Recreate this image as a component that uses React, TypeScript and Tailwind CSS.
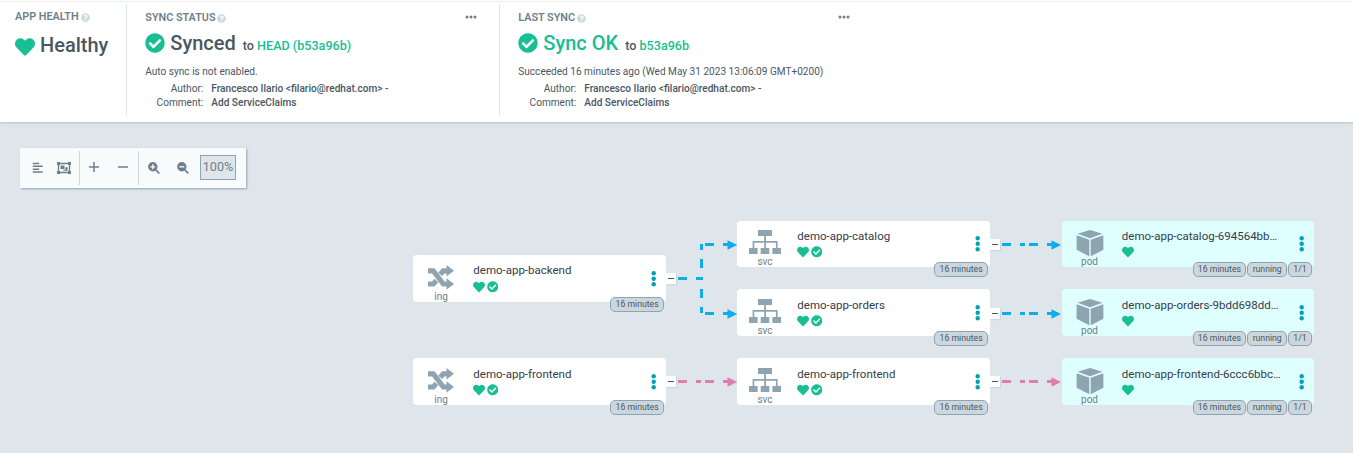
import React from "react";
import {
  FaAlignLeft,
  FaCheckCircle,
  FaHeart,
  FaQuestionCircle,
} from "react-icons/fa";

type Kind = "ing" | "svc" | "pod";

interface ResourceNode {
  kind: Kind;
  name: string;
  tags: string[];
  place: string;
  nameClass?: string;
  bodyClass?: string;
}

const nodes: ResourceNode[] = [
  { kind: "ing", name: "demo-app-backend", tags: ["16 minutes"], place: "left-[413px] top-[132px] h-[47px]", nameClass: "-mt-px mb-px" },
  { kind: "ing", name: "demo-app-frontend", tags: ["16 minutes"], place: "left-[413px] top-[235px] h-[47px]" },
  { kind: "svc", name: "demo-app-catalog", tags: ["16 minutes"], place: "left-[737px] top-[98px] h-[46px]", bodyClass: "-mt-px" },
  { kind: "svc", name: "demo-app-orders", tags: ["16 minutes"], place: "left-[737px] top-[166px] h-[47px]" },
  { kind: "svc", name: "demo-app-frontend", tags: ["16 minutes"], place: "left-[737px] top-[235px] h-[47px]" },
  { kind: "pod", name: "demo-app-catalog-694564bb…", tags: ["16 minutes", "running", "1/1"], place: "left-[1062px] top-[98px] h-[46px]", bodyClass: "-mt-px" },
  { kind: "pod", name: "demo-app-orders-9bdd698dd…", tags: ["16 minutes", "running", "1/1"], place: "left-[1062px] top-[166px] h-[47px]" },
  { kind: "pod", name: "demo-app-frontend-6ccc6bbc…", tags: ["16 minutes", "running", "1/1"], place: "left-[1062px] top-[235px] h-[47px]" },
];

const toggles = [
  "left-[666px] top-[150px]",
  "left-[666px] top-[253px]",
  "left-[990px] top-[116px]",
  "left-[990px] top-[185px]",
  "left-[990px] top-[253px]",
];

function PodIcon() {
  return (
    <svg width="28" height="27" viewBox="0 0 28 27" fill="#8fa4b1">
      <path d="M14 0 26.5 3.8 14 8.2 1.5 3.8Z" />
      <path d="M.6 5.2 13.3 9.7V26.3L.6 19.8Z" />
      <path d="M27.4 5.2 14.7 9.7V26.3L27.4 19.8Z" />
    </svg>
  );
}

function IngressIcon() {
  return (
    <svg width="26" height="25" viewBox="0 0 26 25" fill="none" stroke="#8fa4b1" strokeWidth="5.2">
      <path d="M0 5.8H5.3L15.3 19H20" />
      <path d="M0 19H5.3L8.4 15.5M12.2 9.4 15.3 5.8H20" />
      <path d="M18.5 0 26 5.8 18.5 11.6zM18.5 13.2 26 19 18.5 24.8z" fill="#8fa4b1" stroke="none" />
    </svg>
  );
}

function ServiceIcon() {
  return (
    <svg width="32" height="24" viewBox="0 0 32 24" fill="#8fa4b1">
      <path d="M9 0h14v6H9zM0 18h8.6v6H0zM11.7 18h8.6v6h-8.6zM23.4 18H32v6h-8.6z" />
      <path d="M15.2 6h1.8v12h-1.8zM3.6 11h25v1.8h-25zM3.6 11h1.7v7H3.6zM26.9 11h1.7v7h-1.7z" />
    </svg>
  );
}

function KindIcon({ kind }: { kind: Kind }) {
  if (kind === "ing") return <IngressIcon />;
  if (kind === "svc") return <ServiceIcon />;
  return <PodIcon />;
}

function Node({ node }: { node: ResourceNode }) {
  const pod = node.kind === "pod";
  return (
    <div className={`absolute rounded-[4px] ${pod ? "w-[252px] bg-[#dfffff]" : "w-[253px] bg-white"} ${node.place}`}>
      <div className={`flex ${node.bodyClass ?? ""}`}>
        <div className={`flex shrink-0 flex-col items-center pt-[9px] ${pod ? "w-[55px]" : "w-[56px]"}`}>
          <div className="mt-px flex h-[27px] items-start">
            <KindIcon kind={node.kind} />
          </div>
          <span className="text-[10px] leading-[10px] text-[#6d7f8b]">{node.kind}</span>
        </div>
        <div className={`flex grow flex-col pt-2 ${pod ? "pl-[4.8px]" : "pl-[4.3px]"}`}>
          <span className={`text-[11.5px] leading-4 whitespace-nowrap text-[#363c4a] ${node.nameClass ?? ""}`}>
            {node.name}
          </span>
          <div className="mt-[2px] flex items-center gap-[1.5px] text-[#18be94]">
            <FaHeart className="size-[12px]" />
            {!pod && <FaCheckCircle className="size-[11.5px]" />}
          </div>
        </div>
        <div className="flex w-[25px] shrink-0 justify-center pt-[15.5px]">
          <svg width="5" height="16" viewBox="0 0 5 16" fill="#00a2b3">
            <circle cx="2.7" cy="2.3" r="2.2" />
            <circle cx="2.7" cy="7.8" r="2.2" />
            <circle cx="2.7" cy="13.3" r="2.2" />
          </svg>
        </div>
      </div>
      <div className="absolute right-[2px] bottom-[-10px] flex gap-[1px]">
        {node.tags.map((tag) => (
          <span
            key={tag}
            className="flex h-[15px] items-center rounded-[5px] border border-[#8fa4b1] bg-[#ccd6dd] px-[4.3px] pb-[1px] text-[8.7px] leading-[12px] whitespace-nowrap text-[#495763]"
          >
            {tag}
          </span>
        ))}
      </div>
    </div>
  );
}

function Edges() {
  return (
    <svg className="absolute top-0 left-0" width="1353" height="330" viewBox="0 123 1353 330">
      <g fill="#0dadea">
        <path d="M678 277h9v3h-9zM696 277h7v3h-7zM700 244h3v6h-3zM700 259h3v9h-3zM700 289h3v9h-3zM700 307h3v6h-3z" />
        <path d="M705 243h9v3h-9zM723 243h5v3h-5zM727.5 240.3 737.3 245 727.5 249.7z" />
        <path d="M705 312h9v3h-9zM723 312h5v3h-5zM727.5 309.3 737.3 314 727.5 318.7z" />
        <path d="M1002 243h9v3h-9zM1020 243h5v3h-5zM1029 243h9v3h-9zM1047 243h5v3h-5zM1051.5 240.3 1061 245 1051.5 249.7z" />
        <path d="M1002 312h9v3h-9zM1020 312h5v3h-5zM1029 312h9v3h-9zM1047 312h5v3h-5zM1051.5 309.3 1061 314 1051.5 318.7z" />
      </g>
      <g fill="#de7eae">
        <path d="M678 380h9v3h-9zM696 380h5v3h-5zM705 380h9v3h-9zM723 380h5v3h-5zM727.5 377.3 737.3 382 727.5 386.7z" />
        <path d="M1002 380h9v3h-9zM1020 380h5v3h-5zM1029 380h9v3h-9zM1047 380h5v3h-5zM1051.5 377.3 1061 382 1051.5 386.7z" />
      </g>
    </svg>
  );
}

function Heading({ children }: { children: string }) {
  return (
    <div className="flex items-center gap-[2px] text-[10.8px] leading-4 font-semibold text-[#6d7f8b]">
      {children}
      <FaQuestionCircle className="size-[9px] text-[#ccd6dd]" />
    </div>
  );
}

function Commit() {
  return (
    <div className="mt-[2px] grid grid-cols-[58px_auto] gap-x-2 text-[10.1px] leading-[14px] whitespace-nowrap text-[#495763]">
      <span className="text-right">Author:</span>
      <span className="font-medium">Francesco Ilario &lt;filario@redhat.com&gt; -</span>
      <span className="text-right">Comment:</span>
      <span className="font-medium">Add ServiceClaims</span>
    </div>
  );
}

interface StatusProps {
  title: string;
  status: string;
  statusClass: string;
  revision: string;
  message: string;
}

function Status({ title, status, statusClass, revision, message }: StatusProps) {
  return (
    <section className="flex w-[373px] flex-col border-r border-[#dee6eb] pt-[6px] pl-[18.3px] last:border-r-0 last:pr-px">
      <div className="flex items-center justify-between pr-[22px]">
        <Heading>{title}</Heading>
        <svg className="mb-[3px]" width="12" height="4" viewBox="0 0 12 4" fill="#6d7f8b">
          <circle cx="2" cy="2" r="1.5" />
          <circle cx="6" cy="2" r="1.5" />
          <circle cx="10" cy="2" r="1.5" />
        </svg>
      </div>
      <div className="mt-[4px] flex h-[26px] items-center whitespace-nowrap">
        <FaCheckCircle className="mr-[5px] size-5 text-[#18be94]" />
        <span className={`text-[20px] leading-[26px] font-medium ${statusClass}`}>{status}</span>
        <span className="mt-[6px] ml-[7px] text-[12.6px] font-medium text-[#495763]">
          to <span className="text-[#18be94]">{revision}</span>
        </span>
      </div>
      <p className="mt-2 text-[10.08px] leading-4 whitespace-nowrap text-[#495763]">{message}</p>
      <Commit />
    </section>
  );
}

function GroupIcon() {
  return (
    <svg width="14" height="12" viewBox="0 0 14 12" fill="none" stroke="#6d7f8b">
      <path d="M1.5 1.5h11v9h-11z" strokeWidth="1.4" />
      <path d="M0 0h3v3H0zM11 0h3v3h-3zM0 9h3v3H0zM11 9h3v3h-3zM3.5 3.5h4v3.5h-4zM8.3 5.2h2.3v3.5H6.3V7.8h2z" fill="#6d7f8b" stroke="none" />
    </svg>
  );
}

function ZoomIcon({ plus }: { plus?: boolean }) {
  return (
    <svg width="12" height="12" viewBox="0 0 12 12" fill="none">
      <circle cx="4.8" cy="4.8" r="4.7" fill="#6d7f8b" />
      <path d="M7.8 7.8 11.3 11.3" stroke="#6d7f8b" strokeWidth="1.7" />
      <path d={plus ? "M2.3 4.8h5M4.8 2.3v5" : "M2.3 4.8h5"} stroke="#f8fbfc" strokeWidth="1.3" />
    </svg>
  );
}

function Toolbar() {
  return (
    <div className="absolute top-[25px] left-[20px] flex h-10 w-[226px] items-center bg-[#f8fbfc] text-[#6d7f8b] shadow-[1px_1px_2px_#8fa4b1]">
      <div className="flex h-[34px] w-[60px] items-center gap-[14px] border-r border-[#ccd6dd] pb-px pl-[11.5px]">
        <FaAlignLeft className="size-[11.5px]" />
        <GroupIcon />
      </div>
      <div className="flex h-[34px] w-[59px] items-center gap-[19px] border-r border-[#ccd6dd] pb-[2px] pl-[9px]">
        <svg width="10" height="10" viewBox="0 0 10 10" stroke="#6d7f8b" strokeWidth="1.5">
          <path d="M0 5h10M5 0v10" />
        </svg>
        <svg width="10" height="10" viewBox="0 0 10 10" stroke="#6d7f8b" strokeWidth="1.5">
          <path d="M0 5h10" />
        </svg>
      </div>
      <div className="flex items-center gap-[17px] pb-px pl-[8.5px]">
        <ZoomIcon plus />
        <ZoomIcon />
      </div>
      <div className="mb-px ml-[11.5px] flex h-[25px] w-9 items-center justify-center border border-[#8fa4b1] bg-[#dee6eb] text-[12.6px]">
        100%
      </div>
    </div>
  );
}

export default function App() {
  return (
    <div className="flex h-[453px] w-[1353px] flex-col overflow-hidden bg-[#dee6eb] font-['Roboto',sans-serif]">
      <header className="relative z-10 h-[122px] shrink-0 bg-white pt-px pb-[6px] shadow-[0_1px_2px_#b4c2ca]">
        <div className="flex h-[115px] border-t border-[#eceff1] pt-[2px]">
          <section className="w-[127px] border-r border-[#dee6eb] pt-[5px] pl-[15px]">
            <Heading>APP HEALTH</Heading>
            <div className="mt-[7px] flex items-center gap-[5px] text-[20px] leading-[26px] font-medium text-[#495763]">
              <FaHeart className="mt-1 size-5 text-[#18be94]" />
              Healthy
            </div>
          </section>
          <Status
            title="SYNC STATUS"
            status="Synced"
            statusClass="text-[#495763]"
            revision="HEAD (b53a96b)"
            message="Auto sync is not enabled."
          />
          <Status
            title="LAST SYNC"
            status="Sync OK"
            statusClass="text-[#18be94]"
            revision="b53a96b"
            message="Succeeded 16 minutes ago (Wed May 31 2023 13:06:09 GMT+0200)"
          />
        </div>
      </header>
      <main className="relative mt-[1px] h-[330px]">
        <Toolbar />
        <Edges />
        {nodes.map((node) => (
          <Node key={node.kind + node.name} node={node} />
        ))}
        {toggles.map((place) => (
          <div
            key={place}
            className={`absolute flex h-[11px] w-[10px] items-center justify-center bg-white shadow-[1px_1px_1px_#ccd6dd] ${place}`}
          >
            <span className="h-px w-[6px] bg-[#495763]" />
          </div>
        ))}
      </main>
    </div>
  );
}
